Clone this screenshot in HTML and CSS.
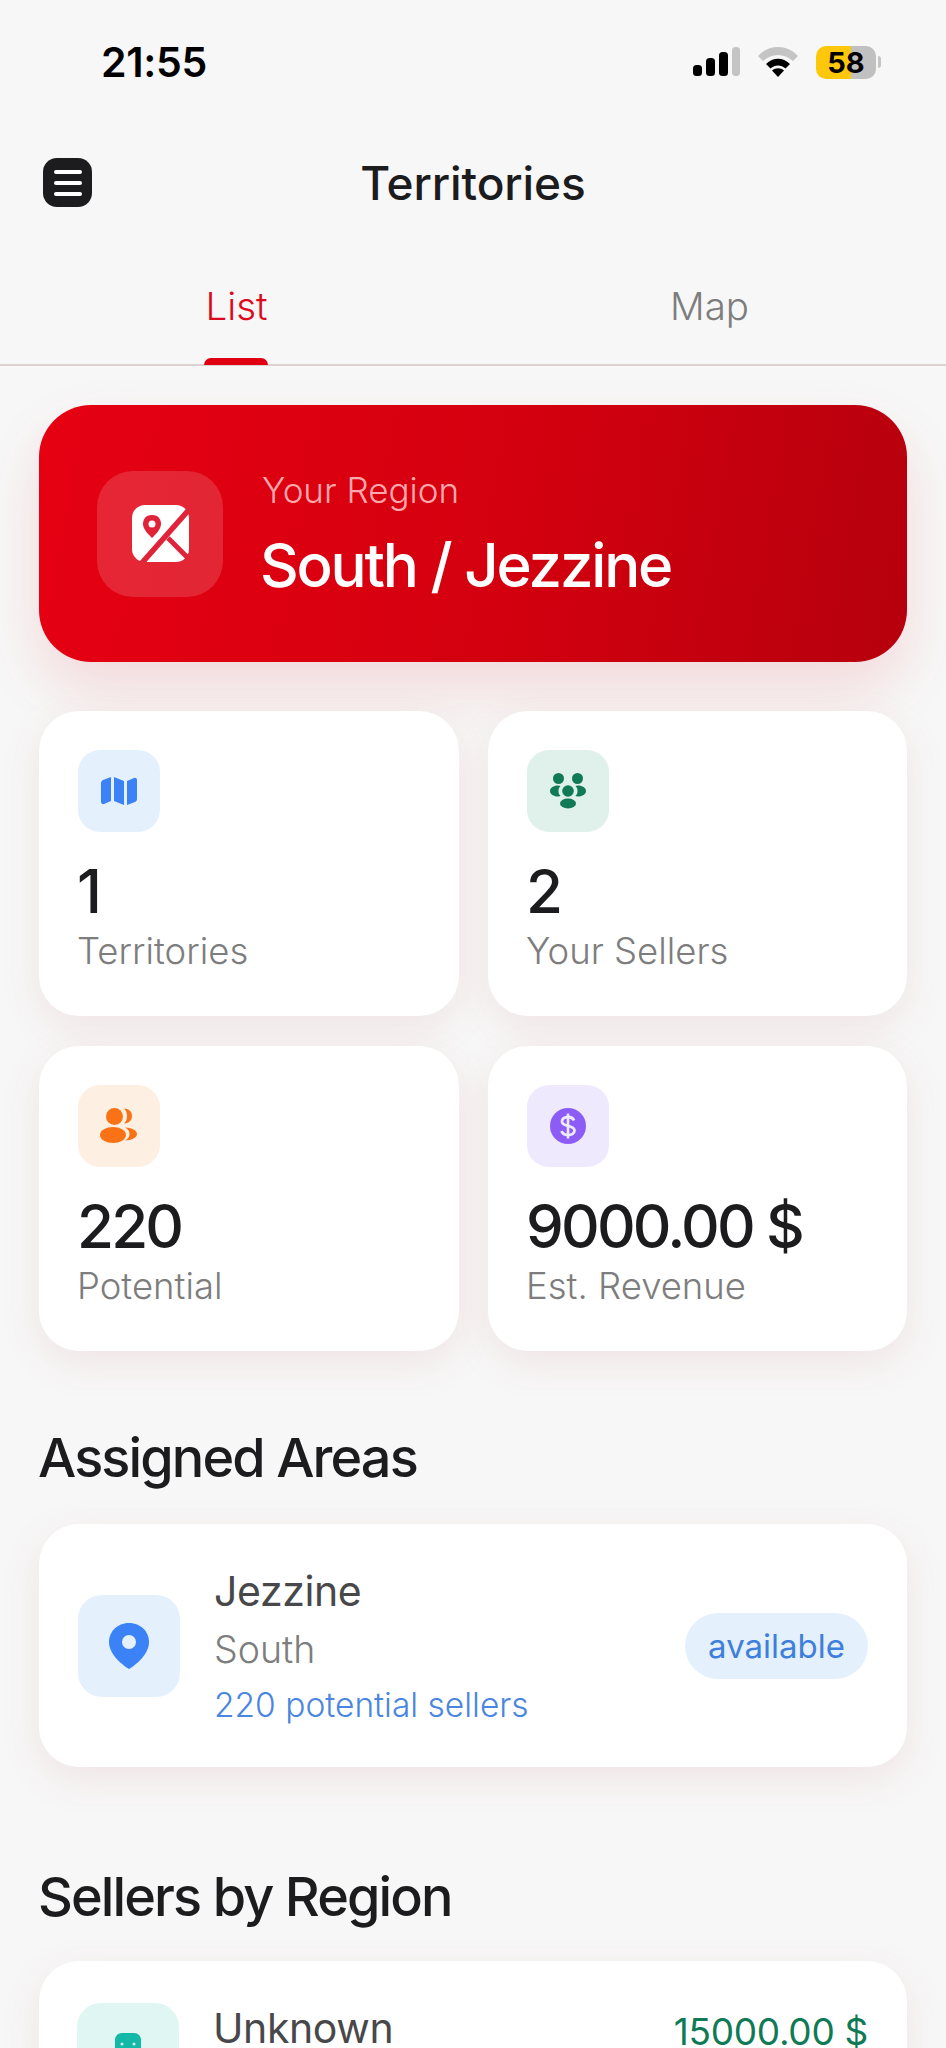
FILE: index.html
```html
<!DOCTYPE html>
<html lang="en">
<head>
    <meta charset="UTF-8">
    <meta name="viewport" content="width=device-width, initial-scale=1.0">
    <title>Territories</title>
    <link rel="stylesheet" href="styles.css">
</head>
<body>
    <div class="status-bar">
        <span class="status-time">21:55</span>
        <div class="status-icons">
            <svg width="47" height="30" viewBox="0 0 47 30">
                <rect x="0" y="18" width="9" height="11" rx="3.500" fill="#000"/>
                <rect x="13" y="11" width="9" height="18" rx="3.500" fill="#000"/>
                <rect x="26" y="5" width="9" height="24" rx="3.500" fill="#000"/>
                <rect x="39" y="0" width="8" height="29" rx="3.500" fill="#c4c4c4"/>
            </svg>
            <svg width="40" height="30" viewBox="0 0 40 30">
                <path d="M0 9 C11 -3 29 -3 40 9 L35 14 C26 6 14 6 5 14 Z" fill="#c4c4c4"/>
                <path d="M8 17 C15 10 25 10 32 17 L27.500 21.500 C23 17.500 17 17.500 12.500 21.500 Z" fill="#000"/>
                <path d="M14 23.500 C17.500 20.500 22.500 20.500 26 23.500 L20 30 Z" fill="#000"/>
            </svg>
            <div class="battery">
                <div class="battery-body"><span>58</span></div>
                <div class="battery-cap"></div>
            </div>
        </div>
    </div>

    <header class="top-bar">
        <button class="menu-btn"><span></span><span></span><span></span></button>
        <h1>Territories</h1>
    </header>

    <nav class="tabs">
        <div class="tab active">List</div>
        <div class="tab">Map</div>
    </nav>

    <main class="content">
        <section class="hero">
            <div class="hero-icon">
                <svg width="57" height="57" viewBox="0 0 57 57">
                    <rect x="0" y="0" width="57" height="57" rx="13" fill="#fff"/>
                    <path d="M62 -1 L9 59" stroke="#df2439" stroke-width="5.500" fill="none"/>
                    <path d="M36 33 L60 57" stroke="#df2439" stroke-width="5" fill="none"/>
                    <path d="M20 10 C27 10 29 15 29 19 C29 24 24 29 20 33 C16 29 11 24 11 19 C11 15 13 10 20 10 Z" fill="#df2439"/>
                    <circle cx="20" cy="19" r="3.500" fill="#fff"/>
                </svg>
            </div>
            <div class="hero-text">
                <div class="hero-label">Your Region</div>
                <div class="hero-name">South / Jezzine</div>
            </div>
        </section>

        <section class="stats">
            <div class="stat-card">
                <div class="stat-icon blue">
                    <svg width="36" height="30" viewBox="0 0 36 30" fill="#3b82f6">
                        <path d="M10 1 V25 L3 28 C1.500 28.500 0 27.500 0 26 V7 C0 5.500 1 4.500 2 4 Z"/>
                        <path d="M13 1 L23 5 V29 L13 25 Z"/>
                        <path d="M26 5 L33 2 C34.500 1.500 36 2.500 36 4 V23 C36 24.500 35 25.500 34 26 L26 29 Z"/>
                    </svg>
                </div>
                <div class="stat-value">1</div>
                <div class="stat-label">Territories</div>
            </div>
            <div class="stat-card">
                <div class="stat-icon green">
                    <svg width="36" height="36" viewBox="0 0 36 36" fill="#0f7a55">
                        <circle cx="8.500" cy="5.500" r="5.500"/>
                        <circle cx="27.500" cy="5.500" r="5.500"/>
                        <circle cx="18" cy="18" r="5.800"/>
                        <path d="M8 12.500 C5 12.500 0 14 0 18 C0 22 5 23.500 8 23.500 C9 23.500 10 23.300 10.500 23 C9 21.500 8.500 20 8.500 18 C8.500 16 9 14.500 10.500 13 C10 12.700 9 12.500 8 12.500 Z"/>
                        <path d="M28 12.500 C31 12.500 36 14 36 18 C36 22 31 23.500 28 23.500 C27 23.500 26 23.300 25.500 23 C27 21.500 27.500 20 27.500 18 C27.500 16 27 14.500 25.500 13 C26 12.700 27 12.500 28 12.500 Z"/>
                        <ellipse cx="18" cy="30.500" rx="8" ry="5"/>
                    </svg>
                </div>
                <div class="stat-value">2</div>
                <div class="stat-label">Your Sellers</div>
            </div>
            <div class="stat-card">
                <div class="stat-icon orange">
                    <svg width="38" height="38" viewBox="0 0 38 38" fill="#f97316">
                        <circle cx="14.500" cy="9.500" r="8.500"/>
                        <ellipse cx="13" cy="28" rx="13" ry="8"/>
                        <path d="M24 1.500 C29 1.500 32 5 32 9 C32 13 29 16.500 24 16.500 C26 14.500 27 12 27 9 C27 6 26 3.500 24 1.500 Z"/>
                        <path d="M25 20.500 C32 20.500 37 23.500 37 27 C37 30.500 32 33.500 25 33.500 C28 32 29.500 30 29.500 27 C29.500 24 28 22 25 20.500 Z"/>
                    </svg>
                </div>
                <div class="stat-value">220</div>
                <div class="stat-label">Potential</div>
            </div>
            <div class="stat-card">
                <div class="stat-icon purple">
                    <svg width="36" height="36" viewBox="0 0 36 36">
                        <circle cx="18" cy="18" r="18" fill="#8b5cf6"/>
                        <path d="M24 12.500 C23 10 21 9 18 9 C14.500 9 12 10.800 12 13.500 C12 19.500 24.500 16.500 24.500 22.500 C24.500 25.300 21.800 27 18 27 C14.800 27 12.500 25.700 11.500 23" stroke="#efe9fe" stroke-width="2.800" fill="none"/>
                        <path d="M18 5.500 V30.500" stroke="#efe9fe" stroke-width="2.600"/>
                    </svg>
                </div>
                <div class="stat-value">9000.00 $</div>
                <div class="stat-label">Est. Revenue</div>
            </div>
        </section>

        <h2 class="section-title areas-title">Assigned Areas</h2>
        <div class="list-card area-card">
            <div class="list-icon blue">
                <svg width="40" height="46" viewBox="0 0 40 46">
                    <path d="M20 0 C32 0 40 9 40 19 C40 31 28 41 20 46 C12 41 0 31 0 19 C0 9 8 0 20 0 Z" fill="#3b82f6"/>
                    <circle cx="20" cy="19" r="7" fill="#e5f0fd"/>
                </svg>
            </div>
            <div class="list-text">
                <div class="list-name">Jezzine</div>
                <div class="list-sub">South</div>
                <div class="list-link">220 potential sellers</div>
            </div>
            <span class="pill">available</span>
        </div>

        <h2 class="section-title sellers-title">Sellers by Region</h2>
        <div class="list-card seller-card">
            <div class="list-icon teal">
                <svg width="26" height="42" viewBox="0 0 26 42">
                    <path d="M0 7 C0 3 3 0 7 0 H19 C23 0 26 3 26 7 V42 H0 Z" fill="#14b8a6"/>
                    <circle cx="7" cy="11" r="1.500" fill="#c9f2ec"/>
                    <circle cx="19" cy="11" r="1.500" fill="#c9f2ec"/>
                </svg>
            </div>
            <div class="list-text">
                <div class="list-name">Unknown</div>
            </div>
            <span class="seller-amount">15000.00 $</span>
        </div>
    </main>
</body>
</html>
```

FILE: styles.css
```css
html, body {
    margin: 0;
    padding: 0;
    height: 2048px;
    overflow: hidden;
}

body {
    font-family: Inter, "Liberation Sans", sans-serif;
    background-color: #f7f7f7;
    color: #1c1c1e;
}

.status-bar {
    display: flex;
    justify-content: space-between;
    align-items: center;
    height: 32px;
    padding: 46px 65px 0 101px;
}

.status-time {
    font-size: 41px;
    font-weight: 600;
    letter-spacing: -0.3px;
    color: #000;
}

.status-icons {
    display: flex;
    align-items: center;
    gap: 18px;
}

.battery {
    display: flex;
    align-items: center;
    gap: 2px;
}

.battery-body {
    width: 60px;
    height: 33px;
    border-radius: 10px;
    background: linear-gradient(90deg, #fdc70c 58%, #c0c0c0 58%);
    display: flex;
    align-items: center;
    justify-content: center;
    font-size: 29px;
    font-weight: 700;
    color: #000;
}

.battery-cap {
    width: 3px;
    height: 12px;
    background-color: #c4c4c4;
    border-radius: 0 3px 3px 0;
}

.top-bar {
    display: flex;
    align-items: center;
    justify-content: center;
    position: relative;
    height: 50px;
    margin-top: 80px;
}

.top-bar h1 {
    margin: 0;
    font-size: 46px;
    font-weight: 500;
    letter-spacing: -0.1px;
    color: #1c1c1e;
}

.menu-btn {
    position: absolute;
    left: 43px;
    top: 0;
    width: 49px;
    height: 49px;
    border: none;
    padding: 0;
    border-radius: 14px;
    background-color: #1c1c1e;
    display: flex;
    flex-direction: column;
    justify-content: center;
    align-items: center;
    gap: 7px;
}

.menu-btn span {
    width: 28px;
    height: 4px;
    border-radius: 2px;
    background-color: #fff;
}

.tabs {
    display: flex;
    height: 126px;
    margin-top: 30px;
    border-bottom: 2px solid #dcd2d0;
}

.tab {
    flex: 1;
    position: relative;
    text-align: center;
    font-size: 38.500px;
    font-weight: 350;
    color: #7d7d7d;
    padding-top: 45px;
    box-sizing: border-box;
}

.tab.active {
    color: #dc0a1c;
}

.tab.active:after {
    content: "";
    position: absolute;
    left: 50%;
    bottom: -1px;
    width: 64px;
    height: 7px;
    margin-left: -33px;
    border-radius: 7px 7px 0 0;
    background-color: #e00012;
}

.content {
    padding: 39px 39px 0;
}

.hero {
    display: flex;
    align-items: center;
    gap: 39px;
    height: 257px;
    box-sizing: border-box;
    padding-left: 58px;
    border-radius: 52px;
    background: linear-gradient(100deg, #e60012 0%, #d3000f 55%, #b6000d 100%);
    box-shadow: 0 28px 60px rgba(224, 0, 18, 0.12);
}

.hero-icon {
    width: 126px;
    height: 126px;
    border-radius: 36px;
    background-color: rgba(255, 255, 255, 0.15);
    display: flex;
    align-items: center;
    justify-content: center;
}

.hero-text {
    margin-top: 3px;
}

.hero-label {
    font-size: 35px;
    font-weight: 350;
    color: #ffa9ae;
    line-height: 44px;
}

.hero-name {
    font-size: 60px;
    font-weight: 500;
    letter-spacing: -2.200px;
    color: #fff;
    line-height: 76px;
    margin: 15px 0 0 -2px;
}

.stats {
    display: grid;
    grid-template-columns: 420px 419px;
    gap: 30px 29px;
    margin-top: 49px;
}

.stat-card {
    height: 305px;
    box-sizing: border-box;
    padding: 39px 38px 0;
    background-color: #fff;
    border-radius: 40px;
    box-shadow: 0 12px 40px rgba(190, 70, 70, 0.1);
}

.stat-icon {
    width: 82px;
    height: 82px;
    margin-left: 1px;
    border-radius: 22px;
    display: flex;
    align-items: center;
    justify-content: center;
}

.list-icon.blue { margin-left: 1px; }
.blue { background-color: #e5f0fd; }
.green { background-color: #e0f0ea; }
.orange { background-color: #feefe3; }
.purple { background-color: #efe9fe; }
.teal { background-color: #e0f6f2; }

.stat-value {
    font-size: 60px;
    font-weight: 500;
    letter-spacing: -2.800px;
    line-height: 74px;
    margin-top: 22px;
    color: #1c1c1e;
}

.stat-label {
    font-size: 36.500px;
    font-weight: 350;
    color: #7d7d7d;
    line-height: 44px;
    margin-top: 1px;
}

.section-title {
    margin: 0 0 0 -1px;
    font-size: 54px;
    font-weight: 500;
    letter-spacing: -1.900px;
    line-height: 66px;
    color: #1c1c1e;
}

.areas-title {
    margin-top: 74px;
}

.sellers-title {
    margin-top: 97px;
}

.list-card {
    display: flex;
    align-items: center;
    background-color: #fff;
    border-radius: 40px;
    box-shadow: 0 12px 40px rgba(190, 70, 70, 0.1);
    padding: 0 39px 0 38px;
}

.area-card {
    height: 243px;
    margin-top: 33px;
}

.seller-card {
    height: 200px;
    margin-top: 31px;
    align-items: flex-start;
    padding-top: 42px;
    box-sizing: border-box;
}

.list-icon {
    flex: none;
    width: 102px;
    height: 102px;
    border-radius: 24px;
    display: flex;
    align-items: center;
    justify-content: center;
}

.teal {
    align-items: flex-start;
    padding-top: 30px;
    box-sizing: border-box;
    overflow: hidden;
}

.list-text {
    flex-grow: 1;
    margin-left: 34px;
}

.list-name {
    font-size: 41px;
    font-weight: 400;
    letter-spacing: -0.4px;
    line-height: 50px;
    color: #48484a;
}

.list-sub {
    font-size: 37.500px;
    font-weight: 350;
    color: #7d7d7d;
    line-height: 44px;
    margin-top: 12px;
}

.list-link {
    font-size: 33.500px;
    font-weight: 350;
    color: #4a86e0;
    line-height: 40px;
    margin-top: 13px;
}

.pill {
    padding: 0 23px;
    height: 66px;
    line-height: 66px;
    border-radius: 33px;
    background-color: #e5f0fd;
    font-size: 33px;
    font-weight: 400;
    color: #3f7fdc;
}

.seller-amount {
    font-size: 37px;
    font-weight: 400;
    letter-spacing: -0.3px;
    color: #0f7a55;
    margin-top: 6px;
}
```
